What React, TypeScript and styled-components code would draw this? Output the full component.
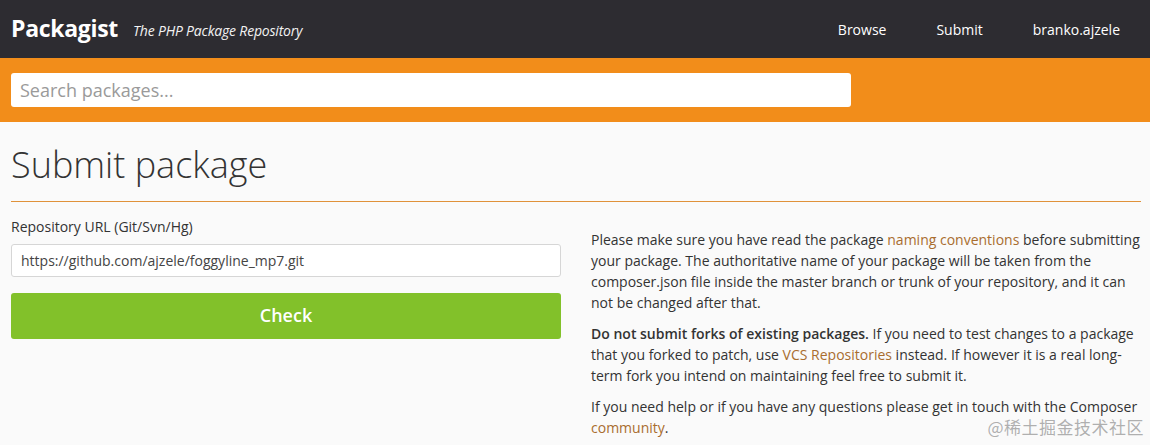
import React from "react"
import styled, { createGlobalStyle } from "styled-components"

const GlobalStyle = createGlobalStyle`
	html, body {
		margin: 0;
		padding: 0;
		background: #fafafa;
		font-family: "Open Sans", "Noto Sans", sans-serif;
		color: #333;
	}
	* {
		box-sizing: border-box;
	}
`

const Page = styled.div`
	position: relative;
	width: 1150px;
	height: 445px;
	overflow: hidden;
	background: #fafafa;
`

const NavBar = styled.header`
	height: 58px;
	background: #2d2c31;
	display: flex;
	align-items: center;
	padding: 0 30px 0 11px;
`

const Brand = styled.a`
	color: #fff;
	font-size: 23px;
	font-weight: 700;
	text-decoration: none;
	letter-spacing: -0.3px;
	margin-top: -2px;
`

const Tagline = styled.span`
	color: #f2f2f2;
	font-size: 14px;
	font-style: italic;
	margin-left: 15px;
	margin-top: 2px;
	letter-spacing: -0.2px;
`

const NavLinks = styled.nav`
	margin-left: auto;
	display: flex;
	gap: 50px;
`

const NavLink = styled.a`
	color: #fff;
	font-size: 14px;
	text-decoration: none;
`

const SearchBar = styled.div`
	height: 64px;
	background: #f28d1a;
	padding: 15px 11px;
`

const SearchInput = styled.input`
	width: 840px;
	height: 34px;
	border: none;
	border-radius: 3px;
	background: #fff;
	padding: 0 9px;
	font-family: "Open Sans", sans-serif;
	font-size: 18px;
	color: #333;
	outline: none;

	&::placeholder {
		color: #9a9a9a;
	}
`

const Main = styled.main`
	padding: 0 9px 0 11px;
`

const Title = styled.h1`
	margin: 0;
	padding-top: 20px;
	height: 80px;
	font-size: 36px;
	font-weight: 300;
	color: #333;
	border-bottom: 1px solid #e0923a;
	line-height: 46px;
`

const Columns = styled.div`
	display: grid;
	grid-template-columns: 550px 550px;
	column-gap: 30px;
	padding-top: 15px;
`

const FormColumn = styled.div`
	display: flex;
	flex-direction: column;
`

const Label = styled.label`
	font-size: 14px;
	line-height: 20px;
	color: #333;
	margin-bottom: 7px;
`

const UrlInput = styled.input`
	height: 33px;
	border: 1px solid #d6d6d6;
	border-radius: 3px;
	background: #fff;
	padding: 0 9px;
	font-family: "Open Sans", sans-serif;
	font-size: 14px;
	color: #444;
	outline: none;
	margin-bottom: 16px;
`

const CheckButton = styled.button`
	height: 46px;
	border: none;
	border-radius: 3px;
	background: #82c12a;
	color: #fff;
	font-family: "Open Sans", sans-serif;
	font-size: 18px;
	font-weight: 600;
	padding-bottom: 3px;
	cursor: pointer;
`

const InfoColumn = styled.div`
	padding-top: 12px;
`

const Paragraph = styled.p`
	margin: 0 0 10px;
	font-size: 14px;
	line-height: 21px;
	color: #333;
`

const Strong = styled.strong`
	font-weight: 600;
`

const Link = styled.a`
	color: #a96d2f;
	text-decoration: none;
`

const Watermark = styled.div`
	position: absolute;
	right: 6px;
	bottom: 6px;
	font-family: "Noto Sans CJK SC", sans-serif;
	font-size: 17px;
	color: rgba(150, 150, 150, 0.75);
	letter-spacing: 0.5px;
`

export default function App() {
	return (
		<Page>
			<GlobalStyle />
			<NavBar>
				<Brand href="#">Packagist</Brand>
				<Tagline>The PHP Package Repository</Tagline>
				<NavLinks>
					<NavLink href="#">Browse</NavLink>
					<NavLink href="#">Submit</NavLink>
					<NavLink href="#">branko.ajzele</NavLink>
				</NavLinks>
			</NavBar>
			<SearchBar>
				<SearchInput placeholder="Search packages..." />
			</SearchBar>
			<Main>
				<Title>Submit package</Title>
				<Columns>
					<FormColumn>
						<Label>Repository URL (Git/Svn/Hg)</Label>
						<UrlInput defaultValue="https://github.com/ajzele/foggyline_mp7.git" />
						<CheckButton>Check</CheckButton>
					</FormColumn>
					<InfoColumn>
						<Paragraph>
							Please make sure you have read the package <Link href="#">naming conventions</Link> before
							submitting your package. The authoritative name of your package will be taken from the
							composer.json file inside the master branch or trunk of your repository, and it can not be
							changed after that.
						</Paragraph>
						<Paragraph>
							<Strong>Do not submit forks of existing packages.</Strong> If you need to test changes to a
							package that you forked to patch, use <Link href="#">VCS Repositories</Link> instead. If
							however it is a real long-term fork you intend on maintaining feel free to submit it.
						</Paragraph>
						<Paragraph>
							If you need help or if you have any questions please get in touch with the Composer{" "}
							<Link href="#">community</Link>.
						</Paragraph>
					</InfoColumn>
				</Columns>
			</Main>
			<Watermark>@稀土掘金技术社区</Watermark>
		</Page>
	)
}
